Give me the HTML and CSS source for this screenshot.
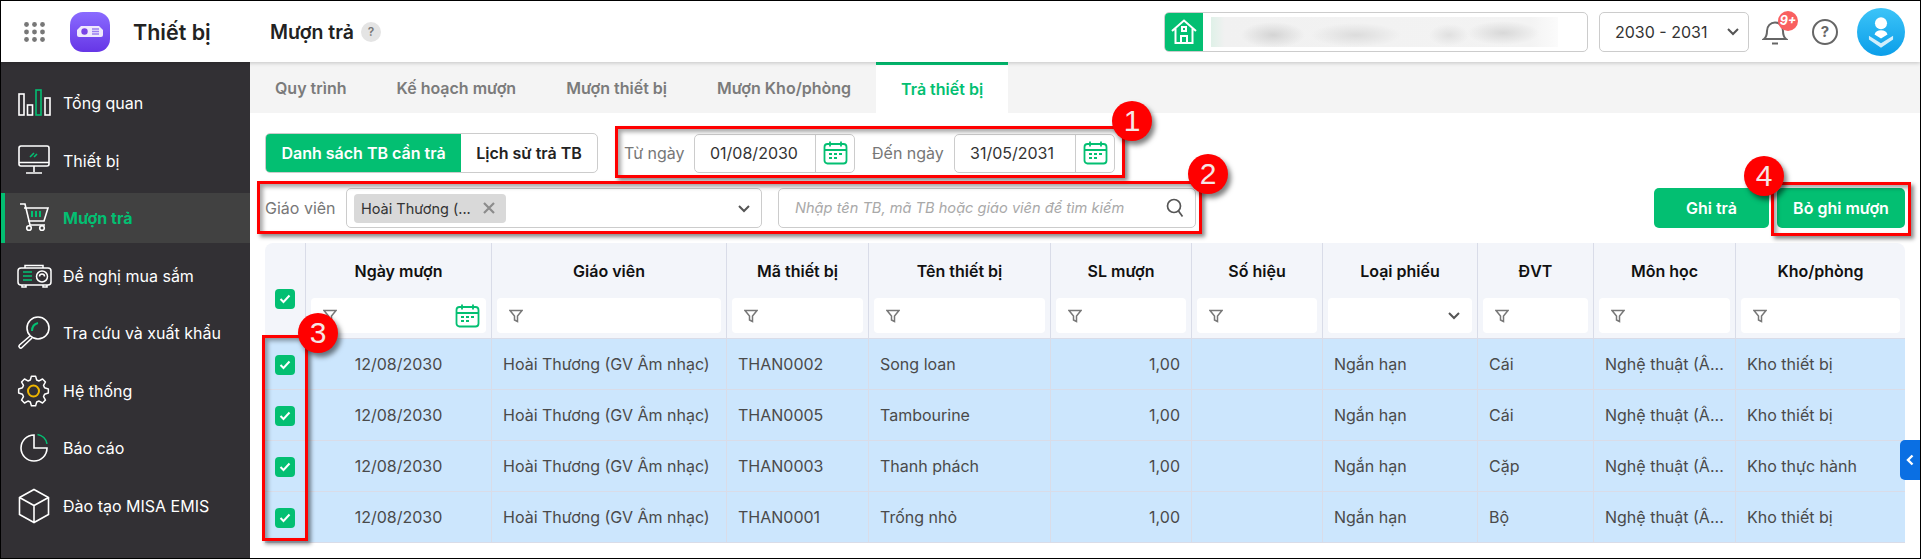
FILE: index.html
```html
<!DOCTYPE html>
<html lang="vi">
<head>
    <meta charset="UTF-8">
    <title>Thiết bị - Mượn trả</title>
    <link rel="stylesheet" href="styles.css">
</head>
<body>
<div class="frame">
    <header class="topbar">
        <svg class="apps-icon" width="21" height="20" viewBox="0 0 21 20">
            <g fill="#777">
                <circle cx="2.5" cy="2.5" r="2.4"/><circle cx="10.5" cy="2.5" r="2.4"/><circle cx="18.5" cy="2.5" r="2.4"/>
                <circle cx="2.5" cy="10" r="2.4"/><circle cx="10.5" cy="10" r="2.4"/><circle cx="18.5" cy="10" r="2.4"/>
                <circle cx="2.5" cy="17.5" r="2.4"/><circle cx="10.5" cy="17.5" r="2.4"/><circle cx="18.5" cy="17.5" r="2.4"/>
            </g>
        </svg>
        <div class="app-logo">
            <svg width="26" height="11" viewBox="0 0 26 11">
                <path d="M4 0h18l4 4v5a2 2 0 0 1-2 2H2a2 2 0 0 1-2-2V4z" fill="#efe9fc"/>
                <circle cx="7.5" cy="5.5" r="3.2" fill="#7a44e6"/>
                <path d="M15 3h7M15 5.5h7M15 8h7" stroke="#9a7df0" stroke-width="1.3"/>
            </svg>
        </div>
        <div class="app-name">Thiết bị</div>
        <div class="page-name">Mượn trả</div>
        <div class="help-dot">?</div>

        <div class="school-box">
            <div class="school-home">
                <svg width="26" height="25" viewBox="0 0 26 25" fill="none" stroke="#fff" stroke-width="2">
                    <path d="M1 12 13 1.500 25 12M4.500 9.500V24h17V9.500M10 24v-7h6v7"/>
                    <rect x="11" y="8" width="4" height="4"/>
                </svg>
            </div>
            <div class="school-blur"></div>
        </div>
        <div class="year-select">
            <span>2030 - 2031</span>
            <svg width="14" height="9" viewBox="0 0 14 9" fill="none" stroke="#555" stroke-width="2"><path d="M2 2l5 5 5-5"/></svg>
        </div>
        <div class="bell">
            <svg width="26" height="28" viewBox="0 0 26 28" fill="none" stroke="#666" stroke-width="2">
                <path d="M2 21c2.500-2 3-4 3-8 0-5 3.500-8.500 8-8.500s8 3.500 8 8.500c0 4 .5 6 3 8z"/>
                <path d="M10 25.500h6"/>
            </svg>
            <span class="bell-badge">9+</span>
        </div>
        <div class="help-ring">?</div>
        <div class="avatar">
            <svg width="28" height="34" viewBox="0 0 28 34" fill="#fff">
                <circle cx="14" cy="6.500" r="6.500"/>
                <path d="M14 14c-3.500 0-6 1.500-7 4.500l7 4.500 7-4.500c-1-3-3.500-4.500-7-4.500z"/>
                <path d="M1 20l13 8 13-8v4L14 33 1 24z" opacity=".8"/>
            </svg>
        </div>
    </header>

    <div class="body-row">
        <nav class="sidebar">
            <a class="nav-item">
                <svg class="nav-icon" width="34" height="30" viewBox="0 0 34 30" fill="none" stroke="#fff" stroke-width="1.6">
                    <rect x="2" y="6" width="5" height="21"/>
                    <rect x="10.5" y="17" width="5" height="10"/>
                    <rect x="19" y="2" width="5" height="25" stroke="#03bf72"/>
                    <rect x="28" y="10" width="5" height="17"/>
                </svg>
                <span>Tổng quan</span>
            </a>
            <a class="nav-item">
                <svg class="nav-icon" width="34" height="30" viewBox="0 0 34 30" fill="none" stroke="#fff" stroke-width="1.6">
                    <rect x="2" y="0" width="30" height="20" rx="2"/>
                    <path d="M2 16.500h30M17 20v6M9 27h16"/>
                    <path d="M13 11l4-4M17 11l3-3" stroke="#03bf72"/>
                </svg>
                <span>Thiết bị</span>
            </a>
            <a class="nav-item active">
                <svg class="nav-icon" width="34" height="30" viewBox="0 0 34 30" fill="none" stroke="#fff" stroke-width="1.6">
                    <path d="M3 1h5l5 21h15M7 5h24l-4 13H11"/>
                    <circle cx="12" cy="25" r="2.3"/>
                    <circle cx="25" cy="25" r="2.3"/>
                    <path d="M15 8v6M19 8v6M23 8v6" stroke="#03bf72" stroke-width="2"/>
                </svg>
                <span>Mượn trả</span>
            </a>
            <a class="nav-item">
                <svg class="nav-icon" width="34" height="30" viewBox="0 0 34 30" fill="none" stroke="#fff" stroke-width="1.5">
                    <rect x="1" y="7" width="33" height="17" rx="3"/>
                    <path d="M8 7V4.500h18V7M5 24v2h4v-2M26 24v2h4v-2"/>
                    <path d="M6 11h9M6 15h9M6 19h9" stroke="#03bf72"/>
                    <circle cx="25" cy="15.500" r="5.500"/>
                    <path d="M22.500 15.500a2.500 2.500 0 0 1 5 0"/>
                </svg>
                <span>Đề nghị mua sắm</span>
            </a>
            <a class="nav-item">
                <svg class="nav-icon" width="34" height="30" viewBox="0 0 34 30" fill="none" stroke="#fff" stroke-width="1.6">
                    <circle cx="21" cy="10" r="11"/>
                    <path d="M13 18 2.500 27a1.500 1.500 0 0 0 2.500 2.500L15 20"/>
                    <path d="M15 13c0-4 2-7 6-8" stroke="#03bf72" stroke-width="2"/>
                </svg>
                <span>Tra cứu và xuất khẩu</span>
            </a>
            <a class="nav-item">
                <svg class="nav-icon" width="34" height="30" viewBox="0 0 34 30" fill="none">
                    <polygon transform="translate(16.5 15)" stroke="#fff" stroke-width="1.5" stroke-linejoin="round" points="14.85,2.09 11.05,3.17 10.06,5.58 11.98,9.03 9.03,11.98 5.58,10.06 3.17,11.05 2.09,14.85 -2.09,14.85 -3.17,11.05 -5.58,10.06 -9.03,11.98 -11.98,9.03 -10.06,5.58 -11.05,3.17 -14.85,2.09 -14.85,-2.09 -11.05,-3.17 -10.06,-5.58 -11.98,-9.03 -9.03,-11.98 -5.58,-10.06 -3.17,-11.05 -2.09,-14.85 2.09,-14.85 3.17,-11.05 5.58,-10.06 9.03,-11.98 11.98,-9.03 10.06,-5.58 11.05,-3.17 14.85,-2.09"/>
                    <circle cx="16.5" cy="15" r="5.5" stroke="#efb600" stroke-width="2"/>
                </svg>
                <span>Hệ thống</span>
            </a>
            <a class="nav-item">
                <svg class="nav-icon" width="34" height="30" viewBox="0 0 34 30" fill="none" stroke="#fff" stroke-width="1.6">
                    <path d="M17 2A13 13 0 1 0 30 15H17z"/>
                    <path d="M20.500 1.500A11.500 11.500 0 0 1 30 10.800" stroke="#03bf72"/>
                </svg>
                <span>Báo cáo</span>
            </a>
            <a class="nav-item">
                <svg class="nav-icon" width="34" height="30" viewBox="0 0 34 30" fill="none" stroke="#fff" stroke-width="1.6">
                    <path d="M17-1.500 31.500 6.500v17L17 31.500 2.500 23.500v-17zM2.500 6.500 17 14.500l14.500-8M17 14.500v17"/>
                </svg>
                <span>Đào tạo MISA EMIS</span>
            </a>
        </nav>

        <main class="content">
            <div class="tabs">
                <div class="tab">Quy trình</div>
                <div class="tab">Kế hoạch mượn</div>
                <div class="tab">Mượn thiết bị</div>
                <div class="tab">Mượn Kho/phòng</div>
                <div class="tab tab-active">Trả thiết bị</div>
            </div>

            <div class="toolbar">
                <div class="toolbar-row">
                    <div class="segmented">
                        <div class="seg seg-on">Danh sách TB cần trả</div>
                        <div class="seg">Lịch sử trả TB</div>
                    </div>
                    <div class="date-filter">
                        <label class="field-label">Từ ngày</label>
                        <div class="date-input">
                            <span class="date-value">01/08/2030</span>
                            <span class="date-btn">
                                <svg width="25" height="24" viewBox="0 0 25 24" fill="none" stroke="#03bf72" stroke-width="1.8"><rect x="1.500" y="3" width="22" height="19.500" rx="3"/><path d="M1.500 9h22M7 .5v5M18 .5v5M6 13h3M11 13h3M16 13h3M6 17h3M11 17h3"/></svg>
                            </span>
                        </div>
                        <label class="field-label label-to">Đến ngày</label>
                        <div class="date-input">
                            <span class="date-value">31/05/2031</span>
                            <span class="date-btn">
                                <svg width="25" height="24" viewBox="0 0 25 24" fill="none" stroke="#03bf72" stroke-width="1.8"><rect x="1.500" y="3" width="22" height="19.500" rx="3"/><path d="M1.500 9h22M7 .5v5M18 .5v5M6 13h3M11 13h3M16 13h3M6 17h3M11 17h3"/></svg>
                            </span>
                        </div>
                    </div>
                </div>

                <div class="toolbar-row row-filter">
                    <label class="field-label label-teacher">Giáo viên</label>
                    <div class="teacher-select">
                        <span class="tag">Hoài Thương (...
                            <svg width="14" height="14" viewBox="0 0 14 14" stroke="#8c8c8c" stroke-width="2.2"><path d="M2 2l10 10M12 2 2 12"/></svg>
                        </span>
                        <svg class="select-arrow" width="14" height="9" viewBox="0 0 14 9" fill="none" stroke="#555" stroke-width="2"><path d="M2 2l5 5 5-5"/></svg>
                    </div>
                    <div class="search-box">
                        <span class="placeholder">Nhập tên TB, mã TB hoặc giáo viên để tìm kiếm</span>
                        <svg width="18" height="20" viewBox="0 0 18 20" fill="none" stroke="#555" stroke-width="1.7"><circle cx="8" cy="8" r="6.500"/><path d="M12.500 13l4 5.500"/></svg>
                    </div>
                    <div class="actions">
                        <button class="btn">Ghi trả</button>
                        <button class="btn">Bỏ ghi mượn</button>
                    </div>
                </div>
            </div>

            <table class="grid">
                <colgroup>
                    <col class="c-check"><col class="c-date"><col class="c-teacher"><col class="c-code"><col class="c-name"><col class="c-qty"><col class="c-serial"><col class="c-type"><col class="c-unit"><col class="c-subject"><col class="c-store">
                </colgroup>
                <thead>
                    <tr class="head-row">
                        <th rowspan="2" class="check-head"><span class="check"><svg width="12" height="10" viewBox="0 0 12 10" fill="none" stroke="#fff" stroke-width="2"><path d="M1.500 5l3 3 6-6.500"/></svg></span></th>
                        <th>Ngày mượn</th><th>Giáo viên</th><th>Mã thiết bị</th><th>Tên thiết bị</th><th>SL mượn</th><th>Số hiệu</th><th>Loại phiếu</th><th>ĐVT</th><th>Môn học</th><th>Kho/phòng</th>
                    </tr>
                    <tr class="filter-row" id="filterRow"></tr>
                </thead>
                <tbody id="gridBody"></tbody>
            </table>
        </main>
    </div>

    <div class="side-toggle">
        <svg width="8" height="12" viewBox="0 0 8 12" fill="none" stroke="#fff" stroke-width="2.4"><path d="M6.500 1.500 2 6l4.500 4.500"/></svg>
    </div>

    <div class="mark mark-1"></div>
    <div class="mark mark-2"></div>
    <div class="mark mark-3"></div>
    <div class="mark mark-4"></div>
    <div class="num num-1">1</div>
    <div class="num num-2">2</div>
    <div class="num num-3">3</div>
    <div class="num num-4">4</div>
</div>
<script src="grid.js"></script>
</body>
</html>
```

FILE: grid.js
```js
const funnel = '<svg width="14" height="14" viewBox="0 0 14 14" fill="none" stroke="#777" stroke-width="1.5"><path d="M1 1.500h12L8.500 7v5.500l-3-1.500V7z"/></svg>';
const calendar = '<svg class="filter-cal" width="25" height="24" viewBox="0 0 25 24" fill="none" stroke="#03bf72" stroke-width="1.8"><rect x="1.500" y="3" width="22" height="19.500" rx="3"/><path d="M1.500 9h22M7 .5v5M18 .5v5M6 13h3M11 13h3M16 13h3M6 17h3M11 17h3"/></svg>';
const arrow = '<svg class="filter-arrow" width="14" height="9" viewBox="0 0 14 9" fill="none" stroke="#555" stroke-width="2"><path d="M2 2l5 5 5-5"/></svg>';
const tick = '<span class="check"><svg width="12" height="10" viewBox="0 0 12 10" fill="none" stroke="#fff" stroke-width="2"><path d="M1.500 5l3 3 6-6.500"/></svg></span>';

const filters = ['date', 'f', 'f', 'f', 'f', 'f', 'select', 'f', 'f', 'f'];
document.getElementById('filterRow').innerHTML = filters.map(type => {
    if (type === 'date') return `<th><div class="filter">${funnel}${calendar}</div></th>`;
    if (type === 'select') return `<th><div class="filter">${arrow}</div></th>`;
    return `<th><div class="filter">${funnel}</div></th>`;
}).join('');

const rows = [
    ['THAN0002', 'Song loan', 'Cái', 'Kho thiết bị'],
    ['THAN0005', 'Tambourine', 'Cái', 'Kho thiết bị'],
    ['THAN0003', 'Thanh phách', 'Cặp', 'Kho thực hành'],
    ['THAN0001', 'Trống nhỏ', 'Bộ', 'Kho thiết bị']
];
document.getElementById('gridBody').innerHTML = rows.map(r => `
    <tr>
        <td class="center">${tick}</td>
        <td class="center">12/08/2030</td>
        <td>Hoài Thương (GV Âm nhạc)</td>
        <td>${r[0]}</td>
        <td>${r[1]}</td>
        <td class="right">1,00</td>
        <td></td>
        <td>Ngắn hạn</td>
        <td>${r[2]}</td>
        <td>Nghệ thuật (Â...</td>
        <td>${r[3]}</td>
    </tr>`).join('');
```

FILE: styles.css
```css
* {
    box-sizing: border-box;
}
body {
    margin: 0;
    font-family: Inter, "Noto Sans", sans-serif;
    font-size: 16px;
    color: #333;
}
.frame {
    position: relative;
    width: 1921px;
    height: 559px;
    border: 1px solid #000;
    overflow: hidden;
    background: #fff;
}

/* top bar */
.topbar {
    position: relative;
    z-index: 2;
    display: flex;
    align-items: center;
    height: 61px;
    background: #fff;
    box-shadow: 0 1px 4px rgba(0,0,0,0.2);
}
.apps-icon {
    margin-left: 23px;
}
.app-logo {
    display: flex;
    align-items: center;
    justify-content: center;
    width: 40px;
    height: 40px;
    margin-left: 25px;
    border-radius: 13px;
    background: linear-gradient(180deg, #8a6bff 0%, #6636e6 100%);
}
.app-name {
    width: 137px;
    margin-left: 23px;
    font-size: 21.5px;
    font-weight: 600;
    color: #222;
}
.page-name {
    font-size: 19.5px;
    font-weight: 600;
    color: #222;
}
.help-dot {
    width: 20px;
    height: 20px;
    margin-left: 7px;
    border-radius: 50%;
    background: #e4e4e4;
    color: #777;
    font-size: 12px;
    font-weight: 600;
    line-height: 20px;
    text-align: center;
}
.school-box {
    display: flex;
    align-items: center;
    width: 424px;
    height: 40px;
    margin-left: auto;
    border: 1px solid #ccc;
    border-radius: 5px;
    overflow: hidden;
}
.school-home {
    display: flex;
    align-items: center;
    justify-content: center;
    width: 38px;
    height: 38px;
    background: #03bf72;
}
/* name of the school is blurred out in the screenshot */
.school-blur {
    width: 347px;
    height: 30px;
    margin-left: 8px;
    background:
        radial-gradient(ellipse 32px 13px at 62px 18px, #d4d4d4, transparent),
        radial-gradient(ellipse 45px 12px at 145px 18px, #dcdcdc, transparent),
        radial-gradient(ellipse 20px 11px at 238px 18px, #e0e0e0, transparent),
        radial-gradient(ellipse 36px 12px at 292px 16px, #d8d8d8, transparent),
        linear-gradient(90deg, #dff1e8 0%, #f1f1f1 4%, #f3f3f3 92%, #fbfbfb 100%);
}
.year-select {
    display: flex;
    align-items: center;
    justify-content: space-between;
    width: 150px;
    height: 40px;
    margin-left: 11px;
    padding: 0 8px 0 15px;
    border: 1px solid #ccc;
    border-radius: 5px;
    color: #333;
}
.bell {
    position: relative;
    width: 26px;
    height: 28px;
    margin-left: 13px;
}
.bell-badge {
    position: absolute;
    top: -7px;
    left: 16px;
    width: 20px;
    height: 20px;
    border-radius: 50%;
    background: #f96060;
    color: #fff;
    font-size: 12.5px;
    font-style: italic;
    font-weight: 700;
    line-height: 20px;
    text-align: center;
}
.help-ring {
    width: 26px;
    height: 26px;
    margin-left: 24px;
    border: 2.5px solid #666;
    border-radius: 50%;
    color: #666;
    font-size: 15px;
    font-weight: 700;
    line-height: 21px;
    text-align: center;
}
.avatar {
    display: flex;
    align-items: center;
    justify-content: center;
    width: 48px;
    height: 48px;
    margin-left: 19px;
    margin-right: 15px;
    padding-top: 3px;
    border-radius: 50%;
    background: linear-gradient(180deg, #3cc4f8 0%, #0b9ee9 100%);
}
.avatar svg {
    width: 26px;
    height: 32px;
}

/* sidebar */
.body-row {
    display: flex;
    height: 496px;
}
.sidebar {
    flex: 0 0 249px;
    display: flex;
    flex-direction: column;
    gap: 7.5px;
    padding-top: 16px;
    background: #323034;
}
.nav-item {
    display: flex;
    align-items: center;
    gap: 12px;
    height: 50px;
    padding-left: 16px;
    color: #fff;
}
.nav-icon {
    flex: none;
    overflow: visible;
}
.nav-item.active {
    padding-left: 12px;
    border-left: 4px solid #03bf72;
    background: #414141;
    color: #03bf72;
    font-weight: 700;
}

/* tabs */
.content {
    flex: 1;
    min-width: 0;
}
.tabs {
    display: flex;
    height: 51px;
    background: #f4f4f4;
}
.tab {
    display: flex;
    align-items: center;
    padding: 0 25px;
    font-weight: 600;
    color: #7b7b7b;
}
.tab-active {
    border-top: 3px solid #03bf72;
    background: #fff;
    color: #03bf72;
}

/* toolbar */
.toolbar {
    padding: 20px 15px 0 15px;
}
.toolbar-row {
    display: flex;
    align-items: center;
}
.row-filter {
    margin-top: 15px;
}
.segmented {
    display: flex;
    width: 333px;
    height: 40px;
    border: 1px solid #ccc;
    border-radius: 5px;
    overflow: hidden;
}
.seg {
    display: flex;
    flex: 1;
    align-items: center;
    justify-content: center;
    font-weight: 600;
    color: #222;
}
.seg-on {
    flex: 0 0 195px;
    background: #03bf72;
    color: #fff;
}
.date-filter {
    display: flex;
    align-items: center;
    margin-left: 26px;
}
.field-label {
    color: #777;
}
.date-filter .field-label {
    width: 70px;
}
.date-filter .label-to {
    width: 82px;
    margin-left: 17px;
}
.date-input {
    display: flex;
    width: 161px;
    height: 39px;
    border: 1px solid #ccc;
    border-radius: 5px;
}
.date-value {
    flex: 1;
    padding-left: 15px;
    line-height: 37px;
    color: #333;
}
.date-btn {
    display: flex;
    align-items: center;
    justify-content: center;
    width: 39px;
    border-left: 1px solid #ccc;
}
.label-teacher {
    width: 81px;
}
.teacher-select {
    position: relative;
    display: flex;
    align-items: center;
    width: 416px;
    height: 40px;
    padding-left: 7px;
    border: 1px solid #ccc;
    border-radius: 5px;
}
.tag {
    display: flex;
    align-items: center;
    justify-content: space-between;
    width: 152px;
    height: 29px;
    padding: 0 10px 0 7px;
    border-radius: 4px;
    background: #d9d9d9;
    font-size: 14.5px;
}
.select-arrow {
    margin-left: auto;
    margin-right: 10px;
}
.search-box {
    display: flex;
    align-items: center;
    justify-content: space-between;
    width: 418px;
    height: 40px;
    margin-left: 16px;
    padding: 0 11px 0 16px;
    border: 1px solid #ccc;
    border-radius: 5px;
}
.placeholder {
    font-size: 14.6px;
    font-style: italic;
    color: #a9a9a9;
}
.actions {
    display: flex;
    gap: 8px;
    margin-left: auto;
}
.btn {
    height: 40px;
    border: none;
    border-radius: 5px;
    background: #03bf72;
    color: #fff;
    font-family: inherit;
    font-size: 16px;
    font-weight: 600;
}
.btn:first-child {
    width: 115px;
}
.btn:last-child {
    width: 128px;
}

/* table */
.grid {
    width: 1640px;
    margin: 15px 0 0 15px;
    border-collapse: separate;
    border-spacing: 0;
    table-layout: fixed;
}
.c-check { width: 41px; }
.c-date { width: 186px; }
.c-teacher { width: 235px; }
.c-code { width: 142px; }
.c-name { width: 182px; }
.c-qty { width: 141px; }
.c-serial { width: 131px; }
.c-type { width: 155px; }
.c-unit { width: 116px; }
.c-subject { width: 142px; }
.c-store { width: 169px; }
th {
    padding: 0 5px;
    border-right: 1px solid #d9dce8;
    background: #f3f5fa;
    color: #111;
    font-weight: 600;
}
th:last-child {
    border-right: none;
}
.head-row th {
    height: 55px;
}
.head-row th:first-child {
    border-top-left-radius: 8px;
    padding: 16px 0 0 0;
}
.head-row th:last-child {
    border-top-right-radius: 8px;
}
.filter-row th {
    height: 40px;
    padding-bottom: 5px;
    border-bottom: 1px solid #d9dce8;
}
.check-head {
    border-bottom: 1px solid #d9dce8;
}
.filter {
    display: flex;
    align-items: center;
    justify-content: space-between;
    height: 35px;
    padding: 0 6px 0 12px;
    border-radius: 4px;
    background: #fff;
}
.filter-arrow {
    margin-left: auto;
    margin-right: 5px;
}
.check {
    display: inline-flex;
    align-items: center;
    justify-content: center;
    width: 20px;
    height: 20px;
    border-radius: 4px;
    background: #03bf72;
    vertical-align: middle;
}
td {
    height: 51px;
    padding: 0 11px;
    border-right: 1px solid #d9dce8;
    border-bottom: 1px solid #d9dce8;
    background: #cce6fd;
    color: #4a4a4a;
    white-space: nowrap;
    overflow: hidden;
}
td:first-child {
    padding: 0;
}
td:last-child {
    border-right: none;
}
.center {
    text-align: center;
}
.right {
    text-align: right;
}

/* blue handle + annotation marks drawn over the screenshot */
.side-toggle {
    position: absolute;
    top: 439px;
    right: 0;
    display: flex;
    align-items: center;
    justify-content: center;
    width: 20px;
    height: 40px;
    border-radius: 5px 0 0 5px;
    background: #0a6fe3;
    z-index: 3;
}
.mark {
    position: absolute;
    border: 3px solid #f00;
    box-shadow: 3px 3px 4px rgba(0,0,0,0.45), inset 3px 3px 4px rgba(0,0,0,0.35);
    z-index: 4;
}
.mark-1 { left: 614px; top: 125px; width: 510px; height: 52px; }
.mark-2 { left: 256px; top: 180px; width: 945px; height: 53px; }
.mark-3 { left: 261px; top: 334px; width: 46px; height: 206px; }
.mark-4 { left: 1770px; top: 181px; width: 140px; height: 54px; }
.num {
    position: absolute;
    width: 40px;
    height: 40px;
    border-radius: 50%;
    background: #f00;
    box-shadow: 3px 4px 5px rgba(0,0,0,0.5);
    color: #f5e6e6;
    font-family: "Liberation Sans", sans-serif;
    font-size: 30px;
    line-height: 40px;
    text-align: center;
    z-index: 5;
}
.num-1 { left: 1111px; top: 100px; }
.num-2 { left: 1187px; top: 153px; }
.num-3 { left: 297px; top: 312px; }
.num-4 { left: 1743px; top: 155px; }
```
